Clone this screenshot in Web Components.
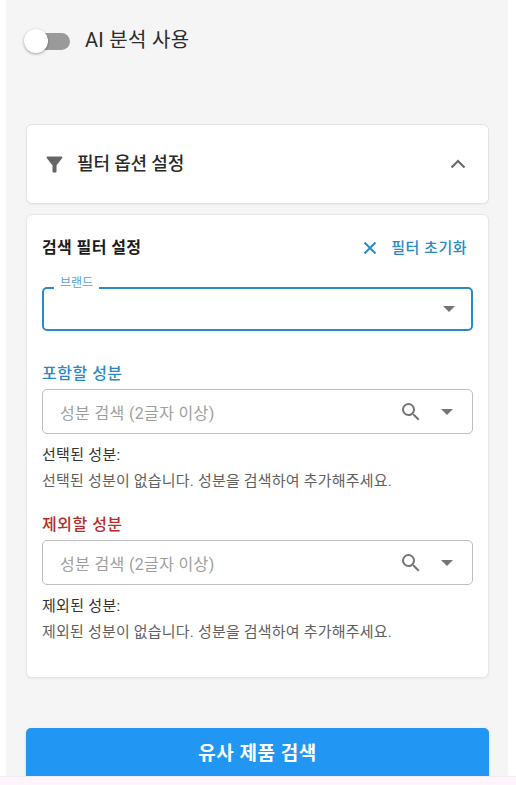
<!DOCTYPE html>
<html lang="ko"><head><meta charset="utf-8"><title>필터</title>
<style>
html,body{margin:0;padding:0;height:785px;overflow:hidden;background:#fff;font-family:Roboto,"Noto Sans CJK KR",sans-serif}
</style></head><body>
<filter-page></filter-page>
<template id="t-page"><style>
:host{display:block;position:relative;height:785px;overflow:hidden;background:#fff}
.main{margin:0 8px 0 6px;height:785px;background:#f5f5f5;padding:0 19px 0 20px;box-sizing:border-box;display:flex;flex-direction:column}
ai-toggle{margin-top:26px}
panel-head{margin-top:70px}
filter-card{margin-top:10px}
search-button{margin-top:50px}
.strip{position:absolute;left:0;right:0;bottom:0;height:9px;background:#fdf5fb;border-top:1px solid #f3eef3;box-sizing:border-box}
</style><div class="main">
<ai-toggle>AI 분석 사용</ai-toggle>
<panel-head>필터 옵션 설정</panel-head>
<filter-card>
 <outlined-select label="브랜드"></outlined-select>
 <ingredient-field title-color="#2b8ac6" title="포함할 성분" sel="선택된 성분:" empty="선택된 성분이 없습니다. 성분을 검색하여 추가해주세요."></ingredient-field>
 <ingredient-field class="second" title-color="#b92c2c" title="제외할 성분" sel="제외된 성분:" empty="제외된 성분이 없습니다. 성분을 검색하여 추가해주세요."></ingredient-field>
</filter-card>
<search-button>유사 제품 검색</search-button>
</div><div class="strip"></div></template>

<template id="t-toggle"><style>
:host{display:flex;align-items:center;height:28px;font:20px/28px Roboto,"Noto Sans CJK KR",sans-serif;letter-spacing:.3px;color:#2b2b2b}
.sw{position:relative;width:34px;height:17px;background:#9a9a9a;border-radius:9px;margin-left:10px;margin-right:15px;flex:none;top:1px}
.knob{position:absolute;left:-12px;top:-4px;width:24px;height:24px;border-radius:50%;background:#fff;box-shadow:0 1px 3px rgba(0,0,0,.35)}
</style><span class="sw"><span class="knob"></span></span><slot></slot></template>

<template id="t-head"><style>
:host{display:flex;align-items:center;height:80px;box-sizing:border-box;background:#fff;border:1px solid #e2e2e2;border-radius:6px;padding:0 22px 0 19px;font:500 18px/24px Roboto,"Noto Sans CJK KR",sans-serif;letter-spacing:-.15px;color:#2a2a2a;box-shadow:0 1px 2px rgba(0,0,0,.04)}
svg{display:block;flex:none}
.t{flex:1;margin-left:14px}
</style><svg width="17" height="17" viewBox="3.5 3.5 17 17"><path fill="#666" d="M4.25 5.61C6.27 8.2 10 13 10 13v6c0 .55.45 1 1 1h2c.55 0 1-.45 1-1v-6s3.72-4.8 5.74-7.39c.51-.66.04-1.61-.79-1.61H5.04c-.83 0-1.3.95-.79 1.61z"/></svg><span class="t"><slot></slot></span><svg width="16" height="16" viewBox="4 4 16 16"><path fill="none" stroke="#666" stroke-width="2" d="M5.5 15.5 12 9l6.5 6.5"/></svg></template>

<template id="t-card"><style>
:host{display:block;height:464px;box-sizing:border-box;background:#fff;border:1px solid #e6e6e6;border-radius:6px;padding:0 15px;box-shadow:0 1px 2px rgba(0,0,0,.05)}
.top{display:flex;align-items:center;justify-content:space-between;height:66px}
h2{margin:0;font:700 16px/22px Roboto,"Noto Sans CJK KR",sans-serif;letter-spacing:.4px;color:#1c1c1c}
.reset{display:flex;align-items:center;gap:13px;font:500 15px/20px Roboto,"Noto Sans CJK KR",sans-serif;letter-spacing:.5px;color:#2b8ac6;padding-right:6px}
svg{display:block}
.body{display:flex;flex-direction:column;margin-top:6px}
</style><div class="top"><h2>검색 필터 설정</h2><span class="reset"><svg width="16" height="16" viewBox="0 0 16 16"><path fill="none" stroke="#2b8ac6" stroke-width="2" d="M2.5 2.5l11 11M13.5 2.5l-11 11"/></svg>필터 초기화</span></div><div class="body"><slot></slot></div></template>

<template id="t-select"><style>
:host{display:block;position:relative;height:44px}
.box{height:44px;box-sizing:border-box;border:2px solid #2b8ac6;border-radius:5px;display:flex;align-items:center;justify-content:flex-end;padding-right:16px}
.lab{position:absolute;left:12px;top:-12px;padding:0 6px;background:#fff;font:12px/16px Roboto,"Noto Sans CJK KR",sans-serif;color:#5a9fd0}
.arrow{width:0;height:0;border:6px solid transparent;border-top:6px solid #757575;border-bottom:0}
</style><div class="box"><span class="arrow"></span></div><span class="lab"></span></template>

<template id="t-field"><style>
:host{display:block;margin-top:31px;font-family:Roboto,"Noto Sans CJK KR",sans-serif}
:host(.second){margin-top:22px}
.ti{font:500 16px/24px Roboto,"Noto Sans CJK KR",sans-serif;letter-spacing:.5px;margin-bottom:3px}
.box{height:45px;box-sizing:border-box;border:1px solid #bdbdbd;border-radius:5px;display:flex;align-items:center;padding:0 19px 0 17px;color:#9e9e9e;font-size:16px;letter-spacing:.35px}
.ph{flex:1}
svg{display:block}
.arrow{width:0;height:0;border:6px solid transparent;border-top:6px solid #757575;border-bottom:0;margin-left:18px}
.sel{font:15px/20px Roboto,"Noto Sans CJK KR",sans-serif;letter-spacing:.3px;color:#333;margin-top:11px}
.em{font:15px/20px Roboto,"Noto Sans CJK KR",sans-serif;letter-spacing:.2px;color:#5f5f5f;margin-top:6px;white-space:nowrap}
</style><div class="ti"></div><div class="box"><span class="ph">성분 검색 (2글자 이상)</span><svg width="24" height="24" viewBox="0 0 24 24"><path fill="#757575" d="M15.5 14h-.79l-.28-.27A6.47 6.47 0 0 0 16 9.5 6.5 6.5 0 1 0 9.5 16c1.61 0 3.09-.59 4.23-1.57l.27.28v.79l5 4.99L20.49 19l-4.99-5zm-6 0C7.01 14 5 11.99 5 9.5S7.01 5 9.5 5 14 7.01 14 9.5 11.99 14 9.5 14z"/></svg><span class="arrow"></span></div><div class="sel"></div><div class="em"></div></template>

<template id="t-btn"><style>
:host{display:flex;justify-content:center;align-items:center;height:52px;flex:none;background:#2196f3;border-radius:5px;color:#fff;font:700 19px/26px Roboto,"Noto Sans CJK KR",sans-serif;letter-spacing:.5px;box-shadow:0 1px 3px rgba(0,0,0,.15)}
</style><slot></slot></template>

<script>
function def(name,tpl,init){customElements.define(name,class extends HTMLElement{constructor(){super();const s=this.attachShadow({mode:'open'});s.appendChild(document.getElementById(tpl).content.cloneNode(true));}connectedCallback(){if(init)init(this,this.shadowRoot);}});}
def('ai-toggle','t-toggle');def('panel-head','t-head');def('filter-card','t-card');
def('outlined-select','t-select',(e,s)=>{s.querySelector('.lab').textContent=e.getAttribute('label');});
def('ingredient-field','t-field',(e,s)=>{const t=s.querySelector('.ti');t.textContent=e.getAttribute('title');t.style.color=e.getAttribute('title-color');s.querySelector('.sel').textContent=e.getAttribute('sel');s.querySelector('.em').textContent=e.getAttribute('empty');});
def('search-button','t-btn');def('filter-page','t-page');
</script>
</body></html>
